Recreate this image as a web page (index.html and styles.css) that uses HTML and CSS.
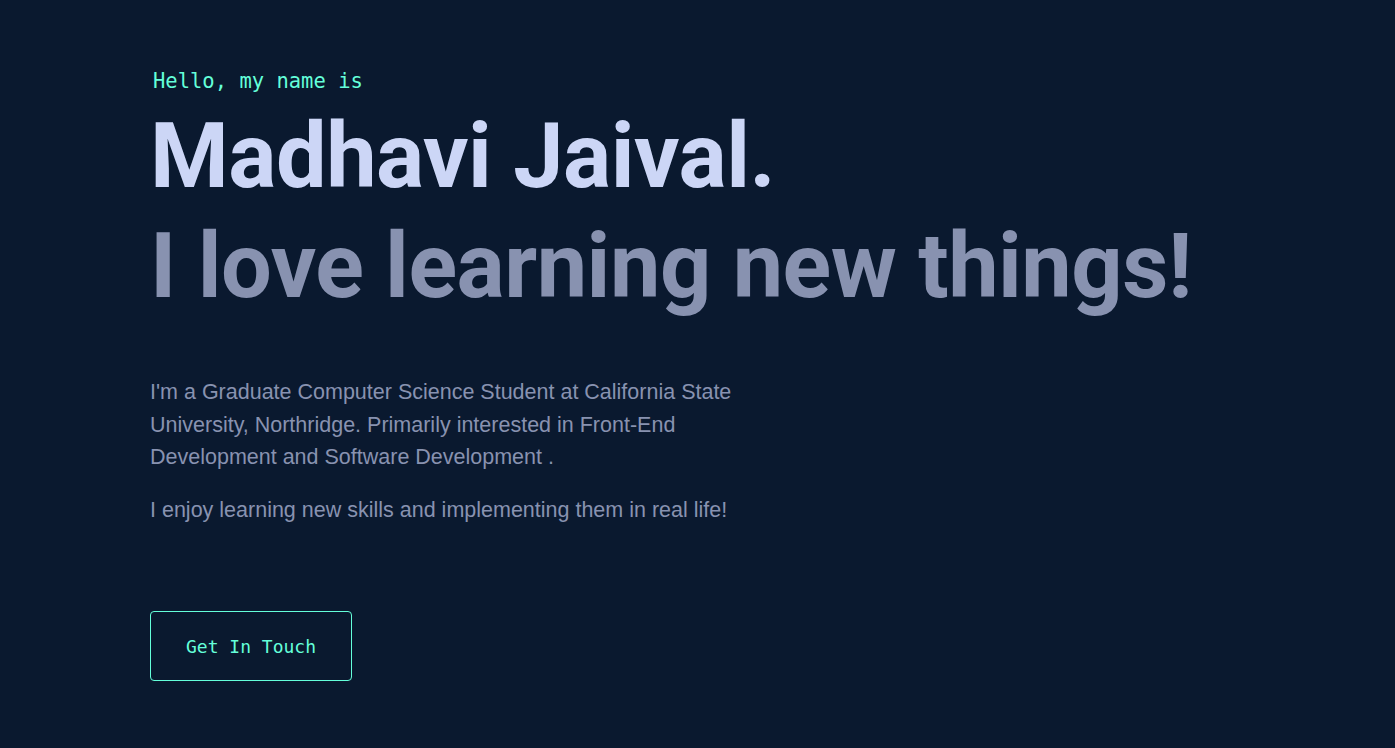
FILE: index.html
```html
<!DOCTYPE html>
<html lang="en">
<head>
<meta charset="utf-8">
<title>Madhavi Jaival</title>
<link rel="stylesheet" href="styles.css">
</head>
<body>
<main class="hero">
  <p class="greet">Hello, my name is</p>
  <h1 class="big name">Madhavi Jaival.</h1>
  <h2 class="big tagline">I love learning new things!</h2>
  <div class="intro">
    <p>I'm a Graduate Computer Science Student at California State University, Northridge. Primarily interested in Front-End Development and Software Development .</p>
    <p>I enjoy learning new skills and implementing them in real life!</p>
  </div>
  <a class="cta" href="#contact">Get In Touch</a>
</main>
</body>
</html>
```

FILE: styles.css
```css
html, body {
  margin: 0;
  height: 100%;
  background: #0a192f;
}
body {
  font-family: "Liberation Sans", Arial, sans-serif;
  overflow: hidden;
}
.hero {
  padding: 69px 0 0 150px;
  display: flex;
  flex-direction: column;
  align-items: flex-start;
}
.greet {
  margin: 0 0 9px 3px;
  font-family: "DejaVu Sans Mono", monospace;
  font-size: 20.5px;
  line-height: 24px;
  color: #64ffda;
}
.big {
  margin: 0;
  font-family: Roboto, "Liberation Sans", Arial, sans-serif;
  font-weight: 700;
  font-size: 90px;
  line-height: 110px;
  letter-spacing: -0.5px;
}
.name { color: #ccd6f6; }
.tagline { color: #8892b0; }
.intro {
  margin-top: 54px;
  max-width: 610px;
  color: #8892b0;
  font-size: 21.5px;
  line-height: 32.5px;
}
.intro p { margin: 0 0 20px; }
.intro p:last-child { margin-bottom: 0; }
.cta {
  margin-top: 85px;
  padding: 23px 35px 21px;
  border: 1px solid #64ffda;
  border-radius: 4px;
  font-family: "DejaVu Sans Mono", monospace;
  font-size: 18px;
  line-height: 24px;
  color: #64ffda;
  text-decoration: none;
}
```
